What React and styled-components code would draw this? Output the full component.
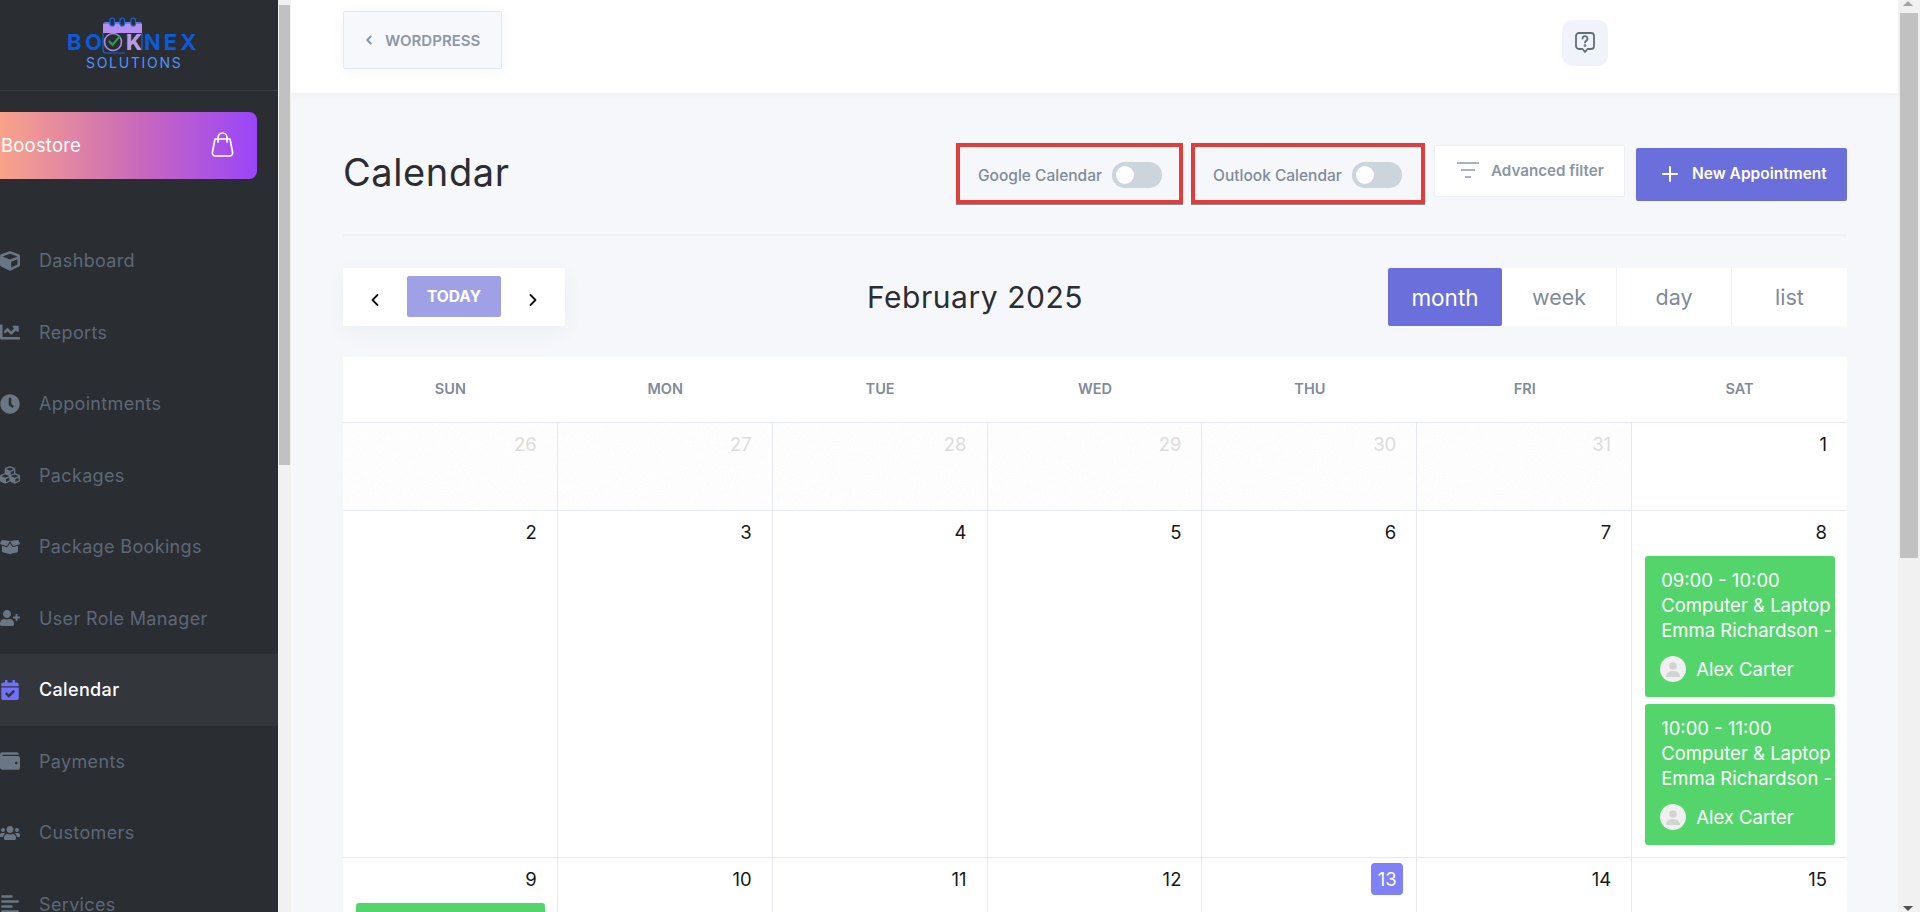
import React from "react";
import styled, { createGlobalStyle } from "styled-components";
import { FaCube, FaChartLine, FaClock, FaCubes, FaBoxOpen, FaUserPlus, FaCalendarCheck, FaWallet, FaUsers, FaAlignLeft } from "react-icons/fa";
import { ChevronLeft, ChevronRight, Plus } from "lucide-react";

const noise = `url("data:image/svg+xml,%3Csvg xmlns='http://www.w3.org/2000/svg' width='240' height='240'%3E%3Cfilter id='n'%3E%3CfeTurbulence type='fractalNoise' baseFrequency='.8' numOctaves='2'/%3E%3CfeColorMatrix values='0 0 0 0 .5 0 0 0 0 .5 0 0 0 0 .5 .1 .1 0 0 -.07'/%3E%3C/filter%3E%3Crect width='100%25' height='100%25' filter='url(%23n)'/%3E%3C/svg%3E")`;

const Global = createGlobalStyle`
  * { box-sizing: border-box; }
  html, body { margin: 0; padding: 0; height: 100%; overflow: hidden; }
  body { font-family: Inter, "Noto Sans", sans-serif; background: #f5f7fb; }
`;

const Page = styled.div`display: flex; width: 1920px; height: 912px; overflow: hidden;`;
const Sidebar = styled.aside`width: 278px; flex: none; height: 912px; background: #2a2d32; overflow: hidden; display: flex; flex-direction: column;`;
const LogoBar = styled.div`height: 91px; flex: none; border-bottom: 1px solid #383b40; display: flex; padding-top: 17px; padding-left: 66px;`;
const Promo = styled.div`
  flex: none; width: 257px; height: 67px; margin-top: 21px; border-radius: 0 8px 8px 0;
  background: linear-gradient(90deg, #f9a38a 0%, #c868bd 55%, #9a45fa 100%);
  color: #fff; display: flex; align-items: center; justify-content: space-between;
  padding: 0 23px 2px 1px; font-size: 18.5px; font-weight: 400; letter-spacing: .2px;
`;
const NavList = styled.nav`display: flex; flex-direction: column; margin-top: 46px; flex: none;`;
const NavItem = styled.div`
  height: 71.5px; flex: none; display: flex; align-items: center; padding-left: 0;
  background: ${p => p.$active ? "#33363b" : "transparent"};
  color: ${p => p.$active ? "#ffffff" : "#5c6878"};
  font-size: 18px; font-weight: ${p => p.$active ? 500 : 400}; letter-spacing: .35px;
`;
const NavIcon = styled.span`
  width: 39px; flex: none; display: flex; align-items: center; font-size: 20px;
  color: ${p => p.$active ? "#7070fa" : "#6a7684"};
`;

const Track = styled.div`
  flex: none; width: ${p => p.$w}px; height: 912px; background: #f1f1f1; display: flex; flex-direction: column;
  align-items: ${p => p.$wide ? "flex-start" : "center"}; padding-left: ${p => p.$wide ? 2 : 0}px; position: relative;
`;
const Thumb = styled.div`flex: none; width: ${p => p.$w}px; height: ${p => p.$h}px; margin-top: ${p => p.$top}px; background: #c1c1c1;`;
const Arrow = styled.div`
  position: absolute; left: 5px; width: 0; height: 0; border-left: 5px solid transparent; border-right: 5px solid transparent;
  ${p => p.$up ? "top: 1px; border-bottom: 5px solid #a3a3a3;" : "bottom: 1px; border-top: 5px solid #505050;"}
`;

const Main = styled.main`flex: 1; min-width: 0; height: 912px; overflow: hidden; display: flex; flex-direction: column; background: #f5f7fb;`;
const TopBar = styled.header`flex: none; height: 93px; background: #fff; padding: 11px 0 0 52px; display: flex; align-items: flex-start; box-shadow: 0 2px 6px rgba(60,70,90,.03);`;
const BackButton = styled.div`
  width: 159px; height: 58px; background: #f7f8fc; border: 1px solid #e3e9f2; border-radius: 2px; display: flex; align-items: center;
  padding-left: 18px; gap: 9px; color: #8b98a8; font-size: 15px; font-weight: 600; box-shadow: 0 2px 14px rgba(60,70,90,.05);
`;
const HelpBox = styled.div`width: 46px; height: 46px; margin: 9px 0 0 1060px; background: #f0f3f9; border-radius: 10px; display: flex; align-items: center; justify-content: center;`;

const Content = styled.div`flex: 1; padding: 0 51px 0 52px;`;
const HeadRow = styled.div`height: 143px; display: flex; border-bottom: 2px solid #edf0f5; position: relative;`;
const Title = styled.h1`margin: 0; padding-top: 55px; font-size: 38px; line-height: 48px; font-weight: 400; color: #2b2d32; letter-spacing: .6px; flex: 1;`;
const SyncBox = styled.div`
  width: ${p => p.$w}px; height: 61px; margin: 50px ${p => p.$mr}px 0 0; border: 4px solid #e03d3d; box-shadow: 0 1px 0 #8a8f96;
  padding: 3px 0 0 18px; display: flex; align-items: center; gap: 10px; font-size: 15.5px; font-weight: 500; color: #7f8b99; white-space: nowrap;
`;
const Toggle = styled.div`flex: none; width: 50px; height: 26px; border-radius: 13px; background: #ccd5dc; padding: 4px; margin-top: -1px;`;
const Knob = styled.div`width: 18px; height: 18px; border-radius: 50%; background: #fff;`;
const FilterBtn = styled.div`
  width: 191px; height: 52px; margin: 52px 11px 0 0; background: #fff; border: 1px solid #edf0f5; border-radius: 2px; display: flex; align-items: center;
  padding: 0 0 2px 22px; gap: 12px; color: #8a96a3; font-size: 15.2px; font-weight: 600; white-space: nowrap;
`;
const NewBtn = styled.div`
  width: 211px; height: 53px; margin-top: 55px; background: #6b6fdb; border-radius: 2px; display: flex; align-items: center;
  padding: 0 0 2px 22px; gap: 10px; color: #fff; font-size: 15.5px; font-weight: 600; white-space: nowrap;
`;

const Toolbar = styled.div`height: 58px; margin-top: 32px; display: flex; align-items: stretch; justify-content: space-between; position: relative;`;
const NavCard = styled.div`width: 222px; background: #fff; display: flex; align-items: flex-start; padding-top: 8px; box-shadow: 0 6px 20px rgba(60,70,90,.05);`;
const NavArrow = styled.div`width: 64px; height: 41px; display: flex; align-items: center; justify-content: center; padding-top: 6px; color: #111;`;
const TodayBtn = styled.div`width: 94px; height: 41px; background: #a0a0e6; border-radius: 2px; color: #fff; font-size: 15.5px; font-weight: 700; display: flex; align-items: center; justify-content: center;`;
const MonthTitle = styled.div`position: absolute; left: 0; right: 0; top: 0; height: 58px; display: flex; align-items: center; justify-content: center; padding: 0 240px 1px 0; font-size: 30px; color: #2b2d32; letter-spacing: .55px; pointer-events: none;`;
const Views = styled.div`width: 459px; display: grid; grid-template-columns: 114px 114px 115px 116px; background: #fff;`;
const ViewBtn = styled.div`
  display: flex; align-items: center; justify-content: center; font-size: ${p => p.$active ? 22.5 : 21.5}px;
  background: ${p => p.$active ? "#6b6fdb" : "#fff"}; color: ${p => p.$active ? "#fff" : "#7f8b9a"};
  border-left: ${p => p.$active || p.$first ? "0" : "1px solid #eef1f5"}; border-radius: ${p => p.$active ? "2px" : "0"};
`;

const Calendar = styled.div`margin-top: 31px; background: #fff;`;
const Row = styled.div`display: grid; grid-template-columns: repeat(7, 1fr); height: ${p => p.$h}px; border-bottom: 1px solid #e6e9f1;`;
const HeadCell = styled.div`display: flex; align-items: center; justify-content: center; color: #7f8b9a; font-size: 14.5px; font-weight: 600; padding-bottom: 2px;`;
const Cell = styled.div`
  display: flex; flex-direction: column; align-items: flex-end; min-width: 0; padding-top: ${p => p.$pt ?? 9}px;
  border-right: ${p => p.$last ? "0" : "1px solid #e6e9f1"};
  ${p => p.$old ? `background-color: #ffffff; background-image: ${noise};` : ""}
`;
const DayNum = styled.div`
  font-size: 18.5px; line-height: 24px; padding-right: 20px;
  color: ${p => p.$old ? "#dcdcdc" : "#16181c"};
`;
const TodayNum = styled(DayNum)`
  width: 32px; height: 32px; margin-top: -3px; margin-right: 13px; padding: 0; background: #8080f8; color: #fff; border-radius: 4px; display: flex; align-items: center; justify-content: center;
`;
const Event = styled.div`
  align-self: stretch; flex: none; height: 141px; margin: ${p => p.$first ? 12 : 7}px 12px 0 13px; background: #54d56c; border-radius: 3px; color: #fff;
  padding: 12px 3px 0 16px; font-size: 18.5px; line-height: 25px; white-space: nowrap; overflow: hidden;
`;
const EventLine = styled.div`overflow: hidden;`;
const Person = styled.div`display: flex; align-items: center; gap: 10px; margin-top: 13px; margin-left: -1px;`;
const Avatar = styled.div`width: 26px; height: 26px; border-radius: 50%; background: #f0f0f0; display: flex; align-items: center; justify-content: center; overflow: hidden;`;

const Logo = () => (
  <svg width="150" height="60" viewBox="66 17 150 60" style={{ overflow: "visible" }}>
    <text x="67" y="50" fontFamily="Inter, sans-serif" fontWeight="700" fontSize="22" fill="#0f5ad6" letterSpacing="3.4">BO</text>
    <text x="126" y="50" fontFamily="Inter, sans-serif" fontWeight="800" fontSize="22" fill="#b79be8">K</text>
    <text x="144" y="50" fontFamily="Inter, sans-serif" fontWeight="700" fontSize="22" fill="#0f5ad6" letterSpacing="3">NEX</text>
    <text x="86" y="68" fontFamily="Inter, sans-serif" fontWeight="400" fontSize="14" fill="#4d94ff" letterSpacing="1.7">SOLUTIONS</text>
    <path d="M103 33 V25 a3 3 0 0 1 3 -3 h33 a3 3 0 0 1 3 3 V33 Z" fill="#b48fee" />
    <path d="M103 33 V50 a3 3 0 0 0 3 3 h19 M142 33 V50" fill="none" stroke="#1a62dc" strokeWidth="1.2" />
    <path d="M103 23 h39" stroke="#1a62dc" strokeWidth="1" />
    {[112, 122, 133].map(x => <rect key={x} x={x - 2} y="18" width="4.5" height="8" rx="2.2" fill="#2a2d32" stroke="#1a62dc" strokeWidth="1.2" />)}
    <circle cx="113" cy="42" r="8.5" fill="none" stroke="#a98be0" strokeWidth="1.6" />
    <path d="M109 41 l3.5 4 l7.5 -9" fill="none" stroke="#1ea84a" strokeWidth="2" />
  </svg>
);

const BagIcon = () => (
  <svg width="23" height="25" viewBox="0 0 23 25" fill="none" stroke="#fff" strokeWidth="1.7" strokeLinecap="round" strokeLinejoin="round">
    <path d="M4 7 H19 L21.6 20.5 a3 3 0 0 1 -3 3.5 H4.4 a3 3 0 0 1 -3 -3.5 Z" />
    <path d="M7 10 V5.5 a4.5 4.5 0 0 1 9 0 V10" />
  </svg>
);

const HelpIcon = () => (
  <svg width="22" height="24" viewBox="0 0 22 24" fill="none" stroke="#626d7a" strokeWidth="1.8" strokeLinecap="round" strokeLinejoin="round">
    <path d="M5 2 h12 a3 3 0 0 1 3 3 v10 a3 3 0 0 1 -3 3 h-3.5 L11 21 L8.5 18 H5 a3 3 0 0 1 -3 -3 V5 a3 3 0 0 1 3 -3 Z" />
    <path d="M8.5 7.5 a2.5 2.5 0 1 1 3.6 2.4 c-.7 .4 -1.1 .9 -1.1 1.6" />
    <circle cx="11" cy="14.6" r=".5" fill="#626d7a" />
  </svg>
);

const FilterIcon = () => (
  <svg width="22" height="18" viewBox="0 0 22 18" stroke="#a9b4bd" strokeWidth="2"><path d="M0 2 h22 M4 9 h14 M8 16 h6" /></svg>
);

const PersonGlyph = () => (
  <svg width="18" height="18" viewBox="0 0 18 18" fill="#d3d3d3"><circle cx="9" cy="6" r="3.8" /><path d="M2 17 c0 -4 3 -6 7 -6 s7 2 7 6 Z" /></svg>
);

const nav = [
  [FaCube, "Dashboard"], [FaChartLine, "Reports"], [FaClock, "Appointments"], [FaCubes, "Packages"], [FaBoxOpen, "Package Bookings"],
  [FaUserPlus, "User Role Manager"], [FaCalendarCheck, "Calendar", true], [FaWallet, "Payments"], [FaUsers, "Customers"], [FaAlignLeft, "Services"],
];
const days = ["SUN", "MON", "TUE", "WED", "THU", "FRI", "SAT"];

const Appt = ({ time, first }) => (
  <Event $first={first}>
    <EventLine>{time}</EventLine>
    <EventLine>Computer &amp; Laptop Repair</EventLine>
    <EventLine>Emma Richardson - emma</EventLine>
    <Person><Avatar><PersonGlyph /></Avatar>Alex Carter</Person>
  </Event>
);

export default function App() {
  return (
    <Page>
      <Global />
      <Sidebar>
        <LogoBar><Logo /></LogoBar>
        <Promo>Boostore<BagIcon /></Promo>
        <NavList>
          {nav.map(([Icon, label, active]) => (
            <NavItem key={label} $active={active}>
              <NavIcon $active={active}><Icon /></NavIcon>{label}
            </NavItem>
          ))}
        </NavList>
      </Sidebar>
      <Track $w={13}><Thumb $w={11} $h={460} $top={5} /></Track>
      <Main>
        <TopBar>
          <BackButton><ChevronLeft size={14} strokeWidth={3.5} />WORDPRESS</BackButton>
          <HelpBox><HelpIcon /></HelpBox>
        </TopBar>
        <Content>
          <HeadRow>
            <Title>Calendar</Title>
            <SyncBox $w={227} $mr={8}>Google Calendar<Toggle><Knob /></Toggle></SyncBox>
            <SyncBox $w={234} $mr={9}>Outlook Calendar<Toggle><Knob /></Toggle></SyncBox>
            <FilterBtn><FilterIcon />Advanced filter</FilterBtn>
            <NewBtn><Plus size={24} strokeWidth={2} />New Appointment</NewBtn>
          </HeadRow>
          <Toolbar>
            <NavCard>
              <NavArrow><ChevronLeft size={20} strokeWidth={2.2} /></NavArrow>
              <TodayBtn>TODAY</TodayBtn>
              <NavArrow><ChevronRight size={20} strokeWidth={2.2} /></NavArrow>
            </NavCard>
            <MonthTitle>February 2025</MonthTitle>
            <Views>
              <ViewBtn $active>month</ViewBtn>
              <ViewBtn $first>week</ViewBtn>
              <ViewBtn>day</ViewBtn>
              <ViewBtn>list</ViewBtn>
            </Views>
          </Toolbar>
          <Calendar>
            <Row $h={66}>{days.map(d => <HeadCell key={d}>{d}</HeadCell>)}</Row>
            <Row $h={88}>
              {[26, 27, 28, 29, 30, 31].map(n => <Cell key={n} $old><DayNum $old>{n}</DayNum></Cell>)}
              <Cell $last><DayNum>1</DayNum></Cell>
            </Row>
            <Row $h={347}>
              {[2, 3, 4, 5, 6, 7].map(n => <Cell key={n}><DayNum>{n}</DayNum></Cell>)}
              <Cell $last>
                <DayNum>8</DayNum>
                <Appt first time="09:00 - 10:00" />
                <Appt time="10:00 - 11:00" />
              </Cell>
            </Row>
            <Row $h={347}>
              <Cell>
                <DayNum>9</DayNum>
                <Appt first time="09:00 - 10:00" />
              </Cell>
              {[10, 11, 12].map(n => <Cell key={n}><DayNum>{n}</DayNum></Cell>)}
              <Cell $pt={8}><TodayNum>13</TodayNum></Cell>
              <Cell><DayNum>14</DayNum></Cell>
              <Cell $last><DayNum>15</DayNum></Cell>
            </Row>
          </Calendar>
        </Content>
      </Main>
      <Track $w={22} $wide>
        <Arrow $up />
        <Thumb $w={18} $h={545} $top={13} />
        <Arrow />
      </Track>
    </Page>
  );
}
